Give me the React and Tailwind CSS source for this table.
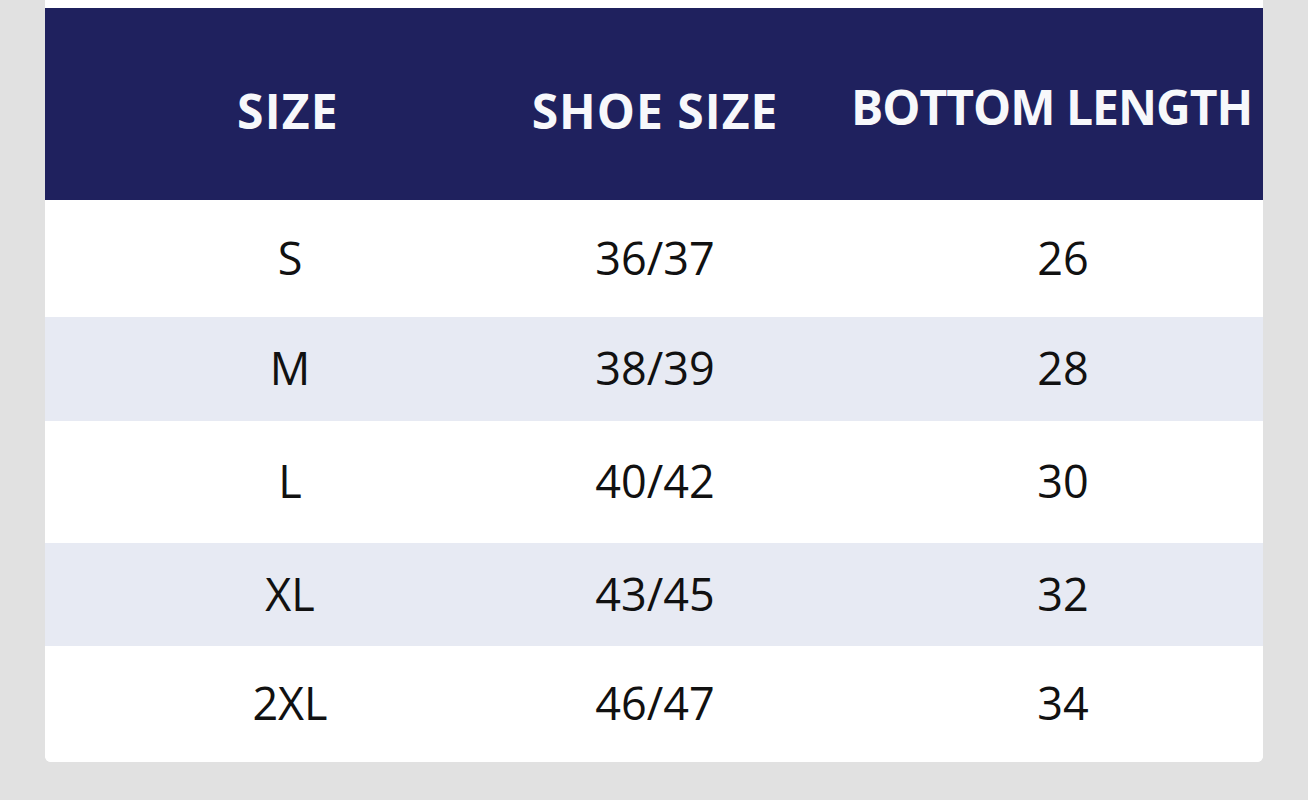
import React from 'react';

const rows = [
    { size: 'S', shoe: '36/37', length: '26', h: 'h-[117px]', bg: 'bg-white' },
    { size: 'M', shoe: '38/39', length: '28', h: 'h-[104px]', bg: 'bg-[#e7eaf3]' },
    { size: 'L', shoe: '40/42', length: '30', h: 'h-[122px]', bg: 'bg-white' },
    { size: 'XL', shoe: '43/45', length: '32', h: 'h-[103px]', bg: 'bg-[#e7eaf3]' },
    { size: '2XL', shoe: '46/47', length: '34', h: 'h-[116px]', bg: 'bg-white' },
];

function App() {
    return (
        <div className="min-h-[800px] bg-[#e1e1e1] px-[45px] font-['Open_Sans',sans-serif]">
            <div className="bg-white pt-[8px] rounded-b-[6px] overflow-hidden">
                {/* Header */}
                <div className="grid grid-cols-[486px_248px_1fr] h-[192px] bg-[#1f215e] text-[#f7f8fb] font-bold text-[48px] leading-none">
                    <div className="flex items-center justify-center pt-[14px] tracking-[1.2px]">SIZE</div>
                    <div className="flex items-center justify-center pt-[14px] whitespace-nowrap tracking-[1px]">SHOE SIZE</div>
                    <div className="flex items-center pl-[72px] pt-[6px] whitespace-nowrap tracking-[-1px]">BOTTOM LENGTH</div>
                </div>

                {/* Rows */}
                {rows.map((r) => (
                    <div key={r.size} className={`grid grid-cols-[486px_248px_1fr] ${r.h} ${r.bg} text-[#111] text-[45px] leading-none`}>
                        <div className="flex items-center justify-center pl-[4px] pb-[3px]">{r.size}</div>
                        <div className="flex items-center justify-center pb-[3px]">{r.shoe}</div>
                        <div className="flex items-center justify-center pl-[84px] pb-[3px]">{r.length}</div>
                    </div>
                ))}
            </div>
        </div>
    );
}

export default App;
